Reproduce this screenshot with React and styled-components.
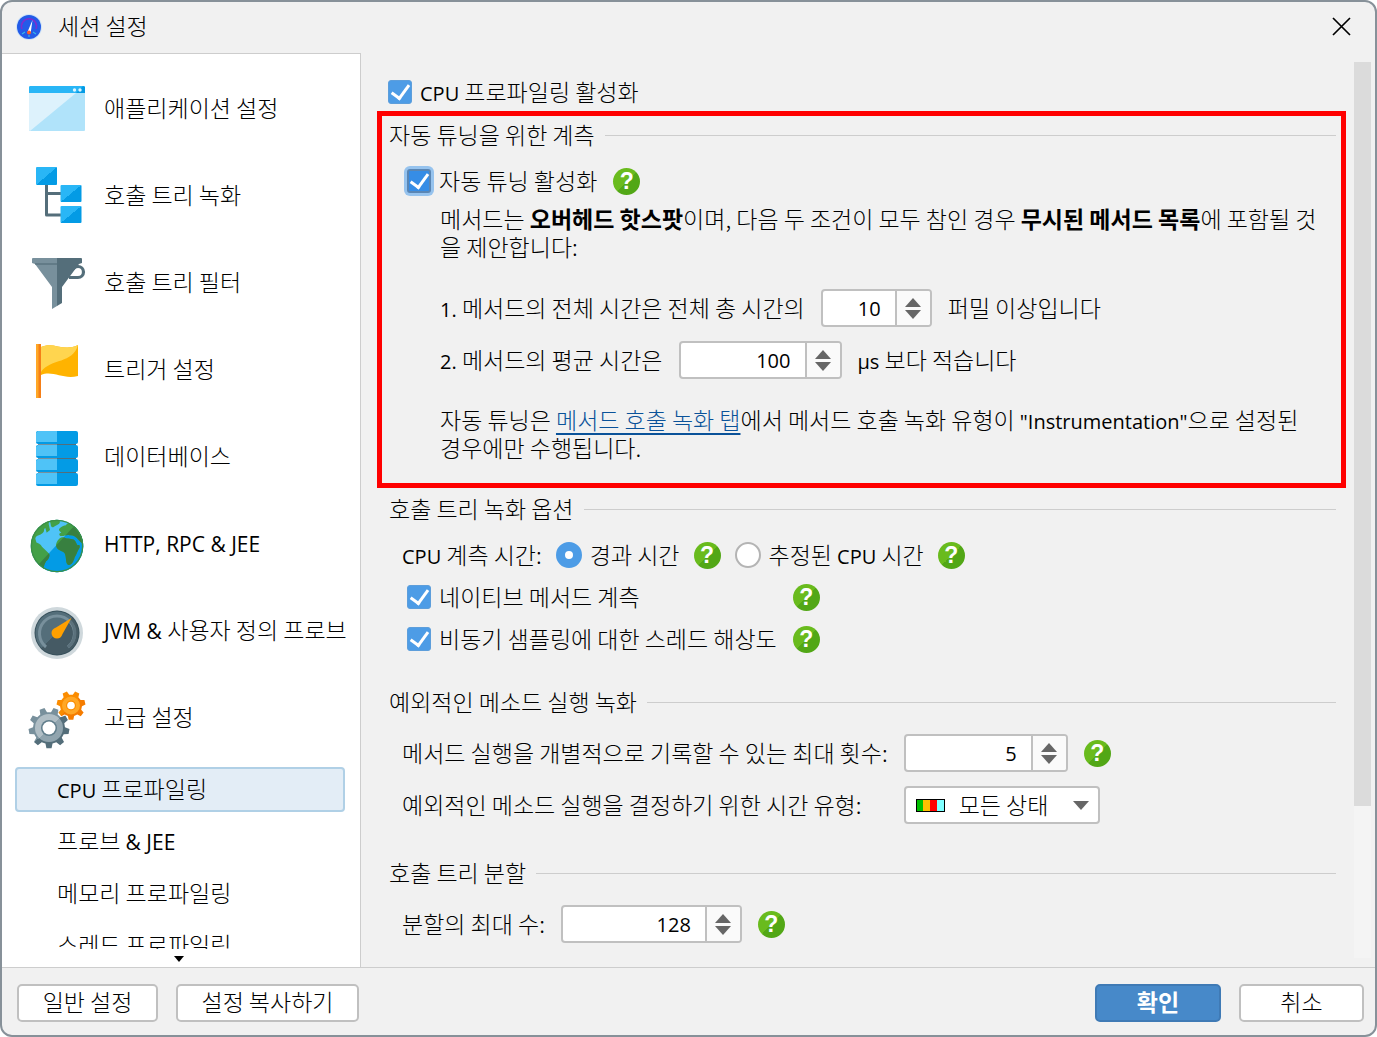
import React, { useState } from 'react';
import styled, { createGlobalStyle, css } from 'styled-components';

const colors = {
  black: '#000',
  white: '#fff',
  frame: '#879199',
  panel: '#f1f1f1',
  line: '#cdcdcd',
  border: '#c0c0c0',
  blue: '#4d9ce6',
  primary: '#4789c9',
  link: '#0a5299',
  red: '#ff0000',
  arrow: '#666'
};

const gearPath = (cx, cy, outer, root, teeth) => {
  const step = (Math.PI * 2) / teeth;
  const point = (r, a) => `${(cx + r * Math.cos(a)).toFixed(2)} ${(cy + r * Math.sin(a)).toFixed(2)}`;
  const parts = [];
  for (let i = 0; i < teeth; i++) {
    const a = Math.PI / 2 + i * step;
    parts.push(
      point(root, a - step * 0.32),
      point(outer, a - step * 0.18),
      point(outer, a + step * 0.18),
      point(root, a + step * 0.32)
    );
  }
  return `M${parts.join('L')}Z`;
};

const Split = ({ id, from, to, ...rest }) => (
  <linearGradient id={id} x1="0" y1="0" x2="1" y2="1" {...rest}>
    <stop offset=".5" stopColor={from} />
    <stop offset=".5" stopColor={to} />
  </linearGradient>
);

const AppIcon = () => (
  <>
    <rect y="5" width="56" height="45" rx="1" fill="#b0e3fa" />
    <path d="M1 50L47 12H0V49Z" fill="#ddf2fc" />
    <path d="M1 5H55L56 6V12H0V6Z" fill="#29b6f6" />
    <path d="M54 5L56 6V12H47Z" fill="#039be5" />
    <circle cx="45.500" cy="9" r="1.700" fill="#e1f5fe" />
    <circle cx="51" cy="9" r="1.700" fill="#e1f5fe" />
  </>
);

const TreeIcon = () => (
  <>
    <defs><Split id="tree-box" from="#29b6f6" to="#039be5" /></defs>
    <path d="M17.500 16V47H33M17.500 25.500H33" fill="none" stroke="#546e7a" strokeWidth="3" strokeLinejoin="round" />
    <rect x="7" y="-1" width="21" height="18" rx="1" fill="url(#tree-box)" />
    <rect x="31.500" y="17" width="21" height="17" rx="1" fill="url(#tree-box)" />
    <rect x="31.500" y="38" width="21" height="17" rx="1" fill="url(#tree-box)" />
  </>
);

const FunnelIcon = () => (
  <>
    <path d="M40 22.500H49A5.500 5.500 0 0 0 49 11.500Q46 11.500 44 14" fill="none" stroke="#546e7a" strokeWidth="3.200" />
    <path d="M3 4Q3 3 4 3H28V51L23 54V32L6 9L3 8Z" fill="#78909c" />
    <path d="M28 3H52Q53 3 53 4V8L50 9L33 32V48L28 51Z" fill="#546e7a" />
    <path d="M6 9H28" stroke="#546e7a" strokeWidth="1.200" />
  </>
);

const FlagIcon = () => (
  <>
    <path d="M12 5C24 -1 34 10 49 3V34C34 38 24 28 12 33Z" fill="#ffb300" />
    <path d="M12 5C24 -1 34 10 49 3C44 22 22 16 12 30Z" fill="#ffd54f" />
    <path d="M7 2H10V56H7Z" fill="#ffa726" />
    <path d="M9.500 2H12V56H9.500Z" fill="#f57f17" />
  </>
);

const DatabaseIcon = () => (
  <>
    <path d="M9 14H47V46H9Z" fill="#78909c" />
    <path d="M28 14H47V46H28Z" fill="#546e7a" />
    {[2, 16, 30, 44].map(y => (
      <g key={y}>
        <rect x="7" y={y} width="42" height="13" rx="2" fill="#039be5" />
        <path d={`M9 ${y}H28V${y + 11}H7V${y + 2}Z`} fill="#4fc3f7" />
      </g>
    ))}
  </>
);

const Land = ({ fill, clip }) => (
  <g fill={fill} clipPath={clip}>
    <path d="M14 80C16 50 40 20 70 14L68 30L72 48L62 56L58 42C50 46 60 52 46 60C36 66 30 64 28 74L32 88L16 94Z" />
    <path d="M20 86C34 84 44 90 48 98L68 118C74 124 68 136 60 142C56 150 52 158 54 166C32 152 16 130 14 100Z" />
    <path d="M70 16C84 12 100 14 102 24C100 32 90 34 84 38C78 42 74 38 74 30Z" />
    <path d="M100 50C96 44 108 36 120 34C122 26 134 28 144 34C164 50 174 74 174 92L164 84L158 78C150 68 140 62 132 64C120 60 114 68 106 66C98 66 98 56 106 56Z" />
    <path d="M90 92C94 74 108 66 118 72C130 76 142 72 148 82L154 94C162 90 164 98 158 106C152 116 152 122 146 130C142 146 134 156 126 152C118 148 122 130 116 118C110 108 92 112 90 92Z" />
  </g>
);

const GlobeIcon = () => (
  <g transform="translate(-3 -2) scale(.3333)">
    <defs>
      <clipPath id="globe"><circle cx="93" cy="96" r="79" /></clipPath>
      <clipPath id="globe-dark"><path d="M150 30L30 160V200H200V30Z" /></clipPath>
    </defs>
    <g clipPath="url(#globe)">
      <path d="M0 0H190V190H0Z" fill="#4fc3f7" />
      <path d="M150 30L30 160V200H200V30Z" fill="#039be5" />
      <Land fill="#43a047" />
      <Land fill="#388040" clip="url(#globe-dark)" />
    </g>
    <circle cx="93" cy="96" r="77" fill="none" stroke="#3c8f45" strokeWidth="4" />
  </g>
);

const GaugeIcon = () => (
  <>
    <defs><Split id="gauge-face" from="#546e7a" to="#455a64" /></defs>
    <circle cx="28" cy="30" r="26" fill="#cfd8dc" />
    <circle cx="28" cy="30" r="22.500" fill="#37505b" />
    <circle cx="28" cy="30" r="21.500" fill="url(#gauge-face)" />
    <path d="M17 44A17.500 17.500 0 1 1 39 44" fill="none" stroke="#78909c" strokeWidth="3" />
    <path d="M40 17A17.500 17.500 0 0 1 39 44" fill="none" stroke="#5b717c" strokeWidth="3" />
    <path d="M42.500 15L33.500 31Q32 35.500 28 35.500A5.500 5.500 0 0 1 22.500 30Q22.500 26 27 24.500Z" fill="#ffa000" />
  </>
);

const GearsIcon = () => (
  <>
    <defs>
      <Split id="gear-big" from="#78909c" to="#546e7a" />
      <Split id="gear-big-face" from="#b0bec5" to="#90a4ae" />
      <Split id="gear-small" from="#fb8c00" to="#f57c00" />
    </defs>
    <path d={gearPath(42, 15.5, 14.5, 11, 7)} fill="url(#gear-small)" />
    <circle cx="42" cy="15.500" r="9" fill="#ffa726" />
    <circle cx="42" cy="15.500" r="5" fill="#fb8c00" />
    <circle cx="42" cy="15.500" r="3.800" fill="#fff" />
    <path d={gearPath(20, 38, 20.5, 16, 9)} fill="url(#gear-big)" />
    <circle cx="20" cy="38" r="14" fill="url(#gear-big-face)" />
    <circle cx="20" cy="38" r="8" fill="#607d8b" />
    <circle cx="20" cy="38" r="6.500" fill="#fff" />
  </>
);

const sections = [
  { label: '애플리케이션 설정', icon: AppIcon },
  { label: '호출 트리 녹화', icon: TreeIcon },
  { label: '호출 트리 필터', icon: FunnelIcon },
  { label: '트리거 설정', icon: FlagIcon },
  { label: '데이터베이스', icon: DatabaseIcon },
  { latin: 'HTTP, RPC & JEE', icon: GlobeIcon },
  { latin: 'JVM & ', label: '사용자 정의 프로브', icon: GaugeIcon },
  { label: '고급 설정', icon: GearsIcon }
];

const Help = () => <HelpButton type="button" aria-label="도움말">?</HelpButton>;

const Check = ({ id, children, focus }) => {
  const [checked, setChecked] = useState(true);

  return (
    <Choice htmlFor={id}>
      <CheckBox
        id={id}
        type="checkbox"
        checked={checked}
        onChange={() => setChecked(!checked)}
        $focus={focus}
      />
      <span>{children}</span>
    </Choice>
  );
};

const Spinner = ({ start, id, $width }) => {
  const [value, setValue] = useState(start);

  return (
    <SpinnerBox $width={$width}>
      <input
        id={id}
        type="number"
        value={value}
        onChange={e => setValue(Number(e.target.value))}
      />
      <div>
        <button type="button" aria-label="증가" onClick={() => setValue(value + 1)}>
          <svg width="16" height="9" viewBox="0 0 16 9"><path d="M0 9L8 0L16 9Z" /></svg>
        </button>
        <button type="button" aria-label="감소" onClick={() => setValue(value - 1)}>
          <svg width="16" height="9" viewBox="0 0 16 9"><path d="M0 0L8 9L16 0Z" /></svg>
        </button>
      </div>
    </SpinnerBox>
  );
};

const App = () => {
  const [timeType, setTimeType] = useState('elapsed');

  return (
    <Dialog>
      <GlobalStyle />
      <TitleBar>
        <svg width="26" height="26" viewBox="0 0 26 26">
          <circle cx="13" cy="13" r="13" fill="#cfe4f6" />
          <circle cx="13" cy="13" r="12" fill="#235be8" />
          <path d="M6 15A7.500 7.500 0 1 1 20 15" fill="none" stroke="#7a2fd0" strokeWidth="1.600" />
          <path d="M6 20L9 18M20 20L17 18M13 23V21" stroke="#35b6e8" strokeWidth="1.200" />
          <path d="M16.500 6L14.800 18H11.500Z" fill="#fff" />
          <circle cx="13" cy="18.500" r="2" fill="#ff5a2b" />
        </svg>
        <h1>세션 설정</h1>
        <button type="button" aria-label="닫기">
          <svg width="19" height="19" viewBox="0 0 19 19">
            <path d="M1 1L18 18M18 1L1 18" stroke="#000" strokeWidth="1.700" />
          </svg>
        </button>
      </TitleBar>

      <Body>
        <Sidebar>
          <NavList>
            {sections.map(({ label, latin, icon: Icon }) => (
              <NavItem key={latin || label} type="button">
                <svg width="57" height="57" viewBox="0 0 57 57" overflow="visible"><Icon /></svg>
                <span>{latin && <Latin $size={21}>{latin}</Latin>}{label}</span>
              </NavItem>
            ))}
            <SubItem type="button" $active><Latin>CPU</Latin> 프로파일링</SubItem>
            <SubItem type="button">프로브 <Latin $size={21}>& JEE</Latin></SubItem>
            <SubItem type="button">메모리 프로파일링</SubItem>
            <SubItem type="button">스레드 프로파일링</SubItem>
          </NavList>
          <MoreButton type="button" aria-label="더 보기">
            <svg width="10" height="6" viewBox="0 0 10 6"><path d="M0 0H10L5 6Z" /></svg>
          </MoreButton>
        </Sidebar>

        <Content>
          <TopRow>
            <Check id="cpu"><Latin>CPU</Latin> 프로파일링 활성화</Check>
          </TopRow>

          <Section $highlight>
            <Heading><span>자동 튜닝을 위한 계측</span></Heading>
            <Row $indent={18}>
              <Check id="tuning" focus>자동 튜닝 활성화</Check>
              <Help />
            </Row>
            <Details>
              <p>
                메서드는 <b>오버헤드 핫스팟</b>이며, 다음 두 조건이 모두 참인 경우 <b>무시된 메서드 목록</b>에 포함될 것을 제안합니다:
              </p>
              <Condition>
                <label htmlFor="total"><Latin>1. </Latin>메서드의 전체 시간은 전체 총 시간의</label>
                <Spinner id="total" start={10} $width={111} />
                <span>퍼밀 이상입니다</span>
              </Condition>
              <Condition>
                <label htmlFor="average"><Latin>2. </Latin>메서드의 평균 시간은</label>
                <Spinner id="average" start={100} $width={163} />
                <span><Latin>µs</Latin> 보다 적습니다</span>
              </Condition>
              <p>
                자동 튜닝은 <a href="#recording">메서드 호출 녹화 탭</a>에서 메서드 호출 녹화 유형이 <Latin>"Instrumentation"</Latin>으로 설정된 경우에만 수행됩니다.
              </p>
            </Details>
          </Section>

          <Section $bottom={25}>
            <Heading><span>호출 트리 녹화 옵션</span></Heading>
            <Row $indent={13} $gap={14} role="radiogroup" aria-labelledby="cpu-time">
              <FieldLabel as="span" id="cpu-time"><Latin>CPU</Latin> 계측 시간:</FieldLabel>
              <Choice>
                <Radio
                  type="radio"
                  name="time"
                  checked={timeType === 'elapsed'}
                  onChange={() => setTimeType('elapsed')}
                />
                <span>경과 시간</span>
              </Choice>
              <Help />
              <Choice>
                <Radio
                  type="radio"
                  name="time"
                  checked={timeType === 'cpu'}
                  onChange={() => setTimeType('cpu')}
                />
                <span>추정된 <Latin>CPU</Latin> 시간</span>
              </Choice>
              <Help />
            </Row>
            <FieldGrid $indent={18} $gap={4}>
              <Check id="native">네이티브 메서드 계측</Check>
              <Help />
              <Check id="async">비동기 샘플링에 대한 스레드 해상도</Check>
              <Help />
            </FieldGrid>
          </Section>

          <Section $bottom={30}>
            <Heading><span>예외적인 메소드 실행 녹화</span></Heading>
            <FieldGrid $indent={13} $gap={14} $spaced>
              <FieldLabel htmlFor="max-runs">메서드 실행을 개별적으로 기록할 수 있는 최대 횟수:</FieldLabel>
              <Row>
                <Spinner id="max-runs" start={5} $width={164} />
                <Help />
              </Row>
              <FieldLabel htmlFor="time-type">예외적인 메소드 실행을 결정하기 위한 시간 유형:</FieldLabel>
              <SelectBox>
                <svg width="29" height="13" viewBox="0 0 29 13">
                  <rect width="29" height="13" fill="#000" />
                  <rect x="1" y="1" width="6" height="11" fill="#00c000" />
                  <rect x="7" y="1" width="7" height="11" fill="#ffc000" />
                  <rect x="14" y="1" width="7" height="11" fill="#f00" />
                  <rect x="21" y="1" width="7" height="11" fill="#80ffff" />
                </svg>
                <select id="time-type">
                  <option>모든 상태</option>
                </select>
                <svg width="16" height="9" viewBox="0 0 16 9"><path d="M0 0H16L8 9Z" fill={colors.arrow} /></svg>
              </SelectBox>
            </FieldGrid>
          </Section>

          <Section>
            <Heading><span>호출 트리 분할</span></Heading>
            <FieldGrid $indent={13} $spaced>
              <FieldLabel htmlFor="splits">분할의 최대 수:</FieldLabel>
              <Row>
                <Spinner id="splits" start={128} $width={181} />
                <Help />
              </Row>
            </FieldGrid>
          </Section>
        </Content>

        <ScrollTrack><div /></ScrollTrack>
      </Body>

      <Footer>
        <Button type="button" $width={141}>일반 설정</Button>
        <Button type="button" $width={183}>설정 복사하기</Button>
        <Spacer />
        <Button type="button" $width={126} $primary>확인</Button>
        <Button type="button" $width={125}>취소</Button>
      </Footer>
    </Dialog>
  );
};

export default App;

const GlobalStyle = createGlobalStyle`
  * {
    box-sizing: border-box;
  }

  body {
    margin: 0;
    background: ${colors.white};
    color: ${colors.black};
    font: 300 23px/28px 'Noto Sans CJK KR', sans-serif;
  }

  button, input, select {
    margin: 0;
    padding: 0;
    border: 0;
    background: none;
    color: inherit;
    font: inherit;
  }

  svg {
    display: block;
    flex: none;
  }
`;

const Latin = styled.span`
  font-family: 'Open Sans', sans-serif;
  font-weight: 400;
  font-size: ${({ $size }) => $size || 20}px;
  line-height: 1;
  white-space: pre-wrap;
`;

const Dialog = styled.div`
  display: flex;
  flex-direction: column;
  height: 100vh;
  border: 2px solid ${colors.frame};
  border-radius: 12px;
  background: ${colors.panel};
  overflow: hidden;
`;

const TitleBar = styled.header`
  display: flex;
  align-items: center;
  flex: none;
  height: 51px;
  padding: 0 24px 2px 14px;

  h1 {
    flex: 1;
    margin: 0 0 0 16px;
    padding-bottom: 3px;
    font: inherit;
  }
`;

const Body = styled.div`
  display: flex;
  flex: 1;
  min-height: 0;
`;

const Sidebar = styled.nav`
  display: flex;
  flex-direction: column;
  flex: 0 0 359px;
  border: solid ${colors.line};
  border-width: 1px 1px 0 0;
  background: ${colors.white};
`;

const NavList = styled.div`
  display: flex;
  flex-direction: column;
  flex: 1;
  min-height: 0;
  padding-top: 12px;
  overflow: hidden;
`;

const NavItem = styled.button`
  display: flex;
  align-items: center;
  flex: none;
  gap: 18px;
  height: 87px;
  padding-left: 27px;
  text-align: left;
  white-space: nowrap;

  > span {
    padding-bottom: 5px;
  }
`;

const SubItem = styled.button`
  flex: none;
  height: 45px;
  margin: 5px 15px 2px 13px;
  padding: 0 0 3px 40px;
  border: 2px solid transparent;
  border-radius: 4px;
  text-align: left;

  ${({ $active }) => $active && css`
    border-color: #b0d0e6;
    background: #e3edf6;
  `}
`;

const MoreButton = styled.button`
  display: flex;
  justify-content: center;
  flex: none;
  height: 18px;
  padding: 7px 4px 0 0;
`;

const Content = styled.main`
  flex: 1;
  min-width: 0;
  padding: 20px 8px 0 16px;
  overflow: hidden;
`;

const Row = styled.div`
  display: flex;
  align-items: center;
  gap: ${({ $gap }) => $gap || 16}px;
  min-height: 38px;
  padding-left: ${({ $indent }) => $indent || 0}px;
`;

const TopRow = styled(Row)`
  padding-left: 11px;
`;

const Section = styled.section`
  padding: 0 10px ${({ $bottom }) => $bottom || 0}px 12px;

  ${({ $highlight }) => $highlight && css`
    margin-bottom: 2px;
    padding: 0 5px 22px 7px;
    border: 5px solid ${colors.red};
  `}
`;

const Heading = styled.h2`
  display: flex;
  align-items: center;
  gap: 10px;
  height: 39px;
  margin: 0 0 7px;
  font: inherit;

  span {
    padding-bottom: 3px;
  }

  &::after {
    content: '';
    flex: 1;
    border-top: 1px solid ${colors.line};
  }
`;

const Choice = styled.label`
  display: flex;
  align-items: center;
  gap: 8px;

  > span {
    padding-bottom: 3px;
  }
`;

const FieldLabel = styled.label`
  padding-bottom: 3px;
`;

const CheckBox = styled.input`
  appearance: none;
  display: flex;
  align-items: center;
  justify-content: center;
  width: 24px;
  height: 24px;
  border: 1px solid #5d9edb;
  border-radius: 3px;
  background: ${colors.white};

  &:checked {
    background: ${colors.blue};
  }

  &:checked::after {
    content: '';
    width: 8px;
    height: 15px;
    margin-bottom: 4px;
    border: solid ${colors.white};
    border-width: 0 3px 3px 0;
    transform: rotate(36deg);
  }

  ${({ $focus }) => $focus && css`
    border: 2px solid #5a86b4;
    box-shadow: 0 0 0 3px #96c3ee;

    &:checked {
      background: #368de6;
    }
  `}
`;

const Radio = styled.input`
  appearance: none;
  width: 26px;
  height: 26px;
  border: 2px solid #b4b4b4;
  border-radius: 50%;
  background: ${colors.white};

  &:checked {
    border: 9px solid ${colors.blue};
  }
`;

const HelpButton = styled.button`
  flex: none;
  width: 27px;
  height: 27px;
  border-radius: 50%;
  background: linear-gradient(135deg, #69bb1d 50%, #52a716 50%);
  color: ${colors.white};
  font: 700 23px/27px 'Liberation Sans', sans-serif;
  text-align: center;
`;

const Details = styled.div`
  padding: 4px 15px 0 51px;

  p {
    margin: 0;
    word-break: break-all;
  }

  p:first-child {
    margin-bottom: 29px;
  }

  p:last-child {
    margin-top: 26px;
  }

  b {
    font-weight: 700;
  }

  a {
    color: ${colors.link};
    text-decoration: underline;
    text-decoration-thickness: 2px;
    text-underline-offset: 4px;
  }
`;

const Condition = styled.div`
  display: flex;
  align-items: center;
  gap: 16px;

  & + & {
    margin-top: 14px;
  }

  > label, > span {
    padding-bottom: 3px;
  }
`;

const FieldGrid = styled.div`
  display: grid;
  grid-template-columns: auto 1fr;
  grid-auto-rows: 38px;
  align-items: center;
  gap: ${({ $gap }) => $gap || 0}px 16px;
  padding: ${({ $spaced }) => ($spaced ? 5 : 4)}px 0 0 ${({ $indent }) => $indent}px;
`;

const SpinnerBox = styled.div`
  display: flex;
  flex: none;
  width: ${({ $width }) => $width}px;
  height: 38px;
  border: 2px solid ${colors.border};
  border-radius: 4px;
  background: ${colors.white};
  overflow: hidden;

  input {
    flex: 1;
    min-width: 0;
    padding: 1px 14px 0 0;
    appearance: textfield;
    font: 400 20px/32px 'Open Sans', sans-serif;
    text-align: right;
    outline: 0;
  }

  input::-webkit-inner-spin-button {
    appearance: none;
    margin: 0;
  }

  > div {
    display: flex;
    flex-direction: column;
    justify-content: center;
    gap: 3px;
    width: 35px;
    border-left: 2px solid ${colors.border};
    background: #fafafa;
  }

  button {
    display: flex;
    justify-content: center;
    fill: ${colors.arrow};
  }
`;

const SelectBox = styled.div`
  display: flex;
  align-items: center;
  gap: 14px;
  width: 196px;
  height: 38px;
  padding: 0 9px 0 10px;
  border: 2px solid ${colors.border};
  border-radius: 4px;
  background: ${colors.white};

  select {
    flex: 1;
    min-width: 0;
    height: 34px;
    padding-bottom: 3px;
    appearance: none;
    outline: 0;
  }
`;

const ScrollTrack = styled.div`
  flex: none;
  width: 17px;
  margin: 9px 4px 9px 0;
  background: #f4f4f4;

  div {
    height: 83%;
    background: #dbdbdb;
  }
`;

const Footer = styled.footer`
  display: flex;
  align-items: center;
  flex: none;
  gap: 18px;
  height: 68px;
  padding: 2px 11px 0 15px;
  border-top: 1px solid ${colors.line};
`;

const Spacer = styled.div`
  flex: 1;
`;

const Button = styled.button`
  width: ${({ $width }) => $width}px;
  height: 38px;
  padding-bottom: 3px;
  border: 2px solid ${colors.border};
  border-radius: 5px;
  background: ${colors.white};

  ${({ $primary }) => $primary && css`
    border-color: #3f7ab5;
    background: ${colors.primary};
    color: ${colors.white};
    font-weight: 700;
  `}
`;
